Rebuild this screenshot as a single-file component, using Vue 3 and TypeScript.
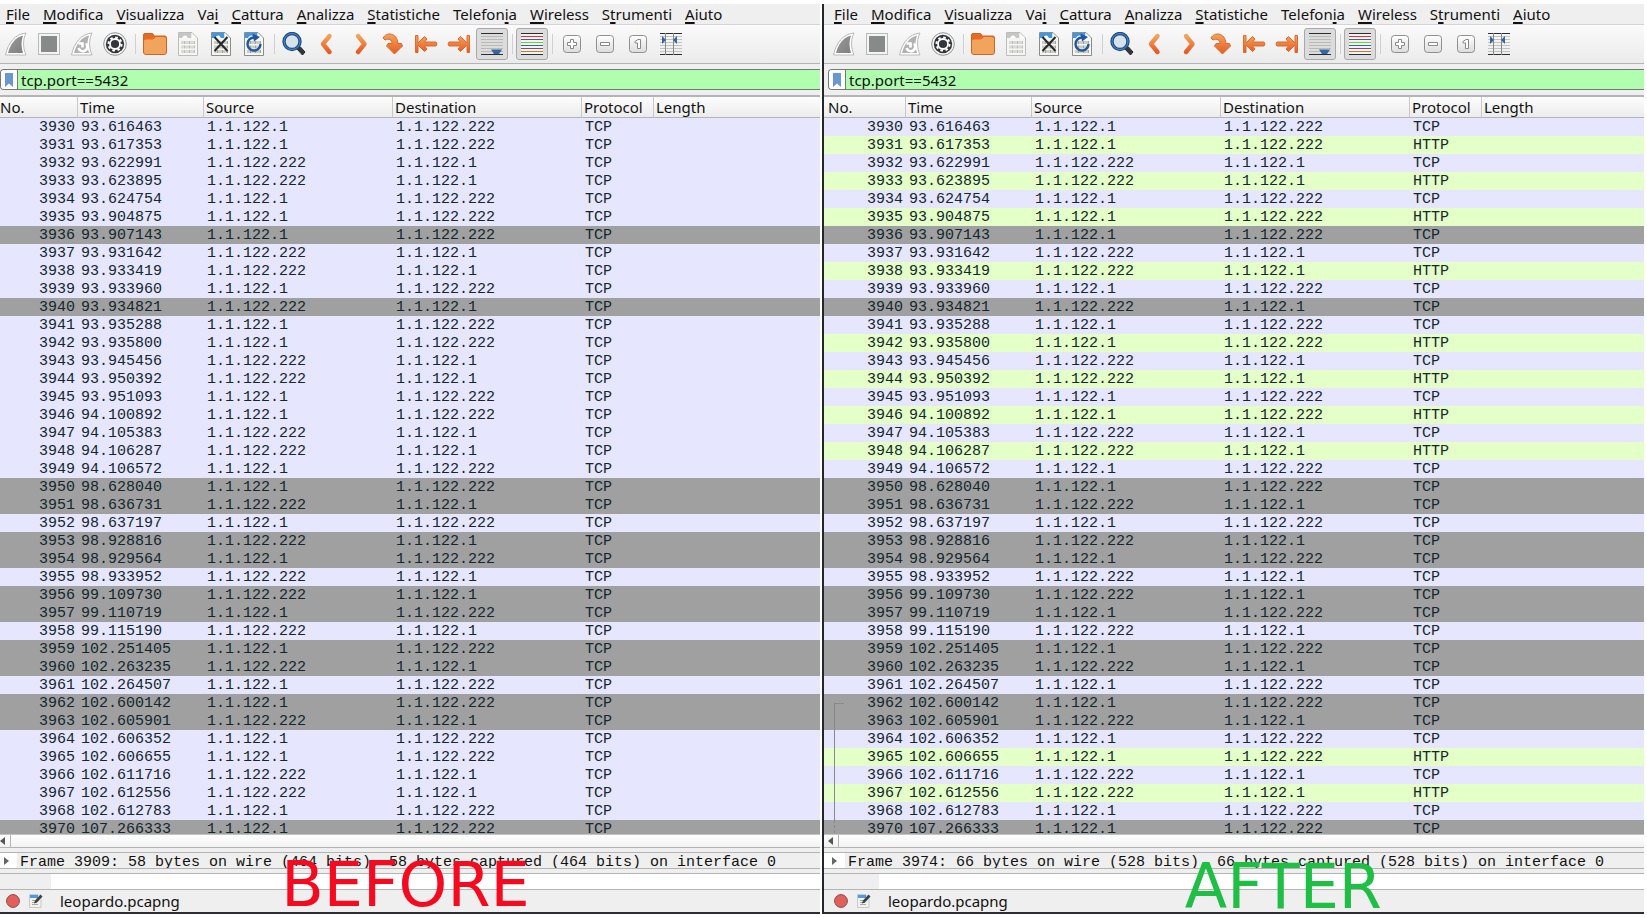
<script setup lang="ts">
interface MenuEntry {
  before: string
  key: string
  after: string
}

interface Packet {
  no: number
  time: string
  source: string
  destination: string
  bad: boolean
}

interface Capture {
  id: string
  caption: string
  frame: string
  http: number[]
  conversation: boolean
}

const menu: MenuEntry[] = [
  'F|ile', 'M|odifica', 'V|isualizza', 'Va>i|', 'C|attura', 'A|nalizza',
  'S|tatistiche', 'Telefon>i|a', 'W|ireless', 'S>t|rumenti', 'A|iuto',
].map((text) => {
  const [head, after] = text.split('|')
  const parts = head.split('>')
  return parts.length === 2
    ? { before: parts[0], key: parts[1], after }
    : { before: '', key: head, after }
})

const tools: { icon: string; label: string; on?: boolean }[] = [
  { icon: 'start', label: 'Avvia cattura' },
  { icon: 'stop', label: 'Ferma cattura' },
  { icon: 'restart', label: 'Riavvia cattura' },
  { icon: 'options', label: 'Opzioni di cattura' },
  { icon: 'sep', label: '' },
  { icon: 'open', label: 'Apri' },
  { icon: 'save', label: 'Salva' },
  { icon: 'close', label: 'Chiudi' },
  { icon: 'reload', label: 'Ricarica' },
  { icon: 'sep', label: '' },
  { icon: 'find', label: 'Trova pacchetto' },
  { icon: 'prev', label: 'Pacchetto precedente' },
  { icon: 'next', label: 'Pacchetto successivo' },
  { icon: 'goto', label: 'Vai al pacchetto' },
  { icon: 'first', label: 'Primo pacchetto' },
  { icon: 'last', label: 'Ultimo pacchetto' },
  { icon: 'scroll', label: 'Scorrimento automatico', on: true },
  { icon: 'sep', label: '' },
  { icon: 'colorize', label: 'Colora pacchetti', on: true },
  { icon: 'sep', label: '' },
  { icon: 'plus', label: 'Ingrandisci' },
  { icon: 'minus', label: 'Riduci' },
  { icon: 'one', label: 'Dimensione normale' },
  { icon: 'resize', label: 'Ridimensiona colonne' },
]

const client = '1.1.122.1'
const server = '1.1.122.222'

// ">" is client to server, "<" is server to client; "!" marks a bad TCP packet.
const trace = `
3930 93.616463 >
3931 93.617353 >
3932 93.622991 <
3933 93.623895 <
3934 93.624754 >
3935 93.904875 >
3936 93.907143 >!
3937 93.931642 <
3938 93.933419 <
3939 93.933960 >
3940 93.934821 <!
3941 93.935288 >
3942 93.935800 >
3943 93.945456 <
3944 93.950392 <
3945 93.951093 >
3946 94.100892 >
3947 94.105383 <
3948 94.106287 <
3949 94.106572 >
3950 98.628040 >!
3951 98.636731 <!
3952 98.637197 >
3953 98.928816 <!
3954 98.929564 >!
3955 98.933952 <
3956 99.109730 <!
3957 99.110719 >!
3958 99.115190 <
3959 102.251405 >!
3960 102.263235 <!
3961 102.264507 >
3962 102.600142 >!
3963 102.605901 <!
3964 102.606352 >
3965 102.606655 >
3966 102.611716 <
3967 102.612556 <
3968 102.612783 >
3970 107.266333 >!`

const packets: Packet[] = trace.trim().split('\n').map((line) => {
  const [no, time, flags] = line.split(' ')
  const out = flags[0] === '>'
  return {
    no: Number(no),
    time,
    source: out ? client : server,
    destination: out ? server : client,
    bad: flags.endsWith('!'),
  }
})

const captures: Capture[] = [
  {
    id: 'before',
    caption: 'BEFORE',
    frame: 'Frame 3909: 58 bytes on wire (464 bits), 58 bytes captured (464 bits) on interface 0',
    http: [],
    conversation: false,
  },
  {
    id: 'after',
    caption: 'AFTER',
    frame: 'Frame 3974: 66 bytes on wire (528 bits), 66 bytes captured (528 bits) on interface 0',
    http: [3931, 3933, 3935, 3938, 3942, 3944, 3946, 3948, 3965, 3967],
    conversation: true,
  },
]

function rowClass(capture: Capture, p: Packet) {
  return {
    bad: p.bad,
    http: capture.http.includes(p.no),
    'conv-start': capture.conversation && p.no === 3962,
    'conv-mid': capture.conversation && p.no > 3962 && p.no < 3970,
    'conv-next': capture.conversation && p.no === 3970,
  }
}
</script>

<template>
  <div class="desktop">
    <svg class="defs" width="0" height="0" aria-hidden="true">
      <defs>
        <linearGradient id="orange" x1="0" y1="0" x2="0" y2="1">
          <stop offset="0" stop-color="#f2a55a" /><stop offset="1" stop-color="#e95a22" />
        </linearGradient>
        <linearGradient id="grey" x1="0" y1="0" x2="1" y2="1">
          <stop offset="0" stop-color="#9c9c9c" /><stop offset="1" stop-color="#7c807e" />
        </linearGradient>
        <linearGradient id="key" x1="0" y1="0" x2="0" y2="1">
          <stop offset="0" stop-color="#ffffff" /><stop offset="1" stop-color="#dcdcdc" />
        </linearGradient>
      </defs>
    </svg>

    <main v-for="c in captures" :key="c.id" class="window" :class="c.id">
      <nav class="menubar">
        <button v-for="m in menu" :key="m.before + m.key + m.after" type="button">{{ m.before }}<u>{{ m.key }}</u>{{ m.after }}</button>
      </nav>

      <div class="toolbar">
        <template v-for="(t, i) in tools" :key="i">
          <span v-if="t.icon === 'sep'" class="sep"></span>
          <button v-else type="button" :class="{ on: t.on }" :aria-label="t.label">
            <svg width="24" height="24" viewBox="0 0 24 24" fill="none">
              <template v-if="t.icon === 'start' || t.icon === 'restart'">
                <path d="M1.5 23C4 11 11 2 22 1C18.500 8 19 16 22 23Z" fill="#fff" stroke="#b9b9b9" />
                <path d="M4 21C6.500 12 11 5.500 19 3.500C17 9 17 15 19 21Z" :fill="t.icon === 'start' ? 'url(#grey)' : '#b0b2b1'" />
                <path v-if="t.icon === 'restart'" d="M8.500 11.500H12.500V15.500M16 11.500A4.500 4.500 0 1 1 8.500 16" stroke="#fff" stroke-width="2.600" />
              </template>
              <template v-else-if="t.icon === 'stop'">
                <rect x="1.500" y="1.500" width="21" height="21" fill="#f4f4f4" stroke="#b9b9b9" />
                <rect x="4" y="4" width="16" height="16" fill="#868a88" />
              </template>
              <template v-else-if="t.icon === 'options'">
                <circle cx="12" cy="12" r="11.300" fill="#f8f8f8" stroke="#929292" />
                <circle cx="12" cy="12" r="9.200" fill="#33363a" />
                <circle cx="12" cy="12" r="5" stroke="#fff" stroke-width="1.800" />
                <circle cx="12" cy="12" r="6.600" stroke="#fff" stroke-width="2" stroke-dasharray="2.600 2.580" />
              </template>
              <template v-else-if="t.icon === 'open'">
                <path d="M.5 20V3Q.5 1.500 2 1.500H9Q10.500 1.500 11 4H22Q23.500 4 23.500 6V20Q23.500 22.500 21 22.500H3Q.5 22.500 .5 20Z" fill="#e86a22" stroke="#c9662a" />
                <path d="M1 9Q1 7.500 3 7.500H10L13 5H21Q23 5 23 7V20Q23 22 21 22H3Q1 22 1 20Z" fill="#f3a45c" />
              </template>
              <template v-else-if="t.icon === 'save' || t.icon === 'close' || t.icon === 'reload'">
                <path d="M2.500 .5H16L21.500 6V23.500H2.500Z" fill="#f6f6f2" :stroke="t.icon === 'save' ? '#bcbcbc' : '#8b8d88'" />
                <path d="M3 1H15.500V6H3Z" :fill="t.icon === 'save' ? '#c6c6c6' : '#3f97e6'" />
                <path d="M6 6Q7 3 10 3.500L12 6ZM15.500 1L21 6.500H15.500Z" fill="#fff" />
                <g :stroke="t.icon === 'save' ? '#bdbdbd' : '#a3a49c'" stroke-width="3">
                  <path d="M5.500 10.500H19M5.500 15H19M5.500 19.500H19" stroke-dasharray="1 1 2 1" />
                </g>
                <path v-if="t.icon === 'close'" d="M5.500 5L18.500 19M18.500 5L5.500 19" stroke="#26292c" stroke-width="2" />
                <template v-if="t.icon === 'reload'">
                  <path d="M18.500 12A6.500 6.500 0 1 1 12 5.500" stroke="#2056a0" stroke-width="2.400" />
                  <path d="M10.500 1.500L18 5L12 9.500Z" fill="#2056a0" />
                </template>
              </template>
              <template v-else-if="t.icon === 'find'">
                <path d="M15 17L18 14.500L23 20L20.500 23Z" fill="#34383c" stroke="#222" />
                <circle cx="10" cy="9.500" r="8" fill="#d8e2ea" stroke="#1f4f86" stroke-width="3.400" />
                <circle cx="10" cy="9.500" r="8" stroke="#4a8ccc" stroke-width="1" />
              </template>
              <path v-else-if="t.icon === 'prev'" d="M14.500 4L8 12L14.500 20" stroke="url(#orange)" stroke-width="4.400" stroke-linecap="round" stroke-linejoin="round" />
              <path v-else-if="t.icon === 'next'" d="M10 4L16.500 12L10 20" stroke="url(#orange)" stroke-width="4.400" stroke-linecap="round" stroke-linejoin="round" />
              <path v-else-if="t.icon === 'goto'" d="M2 6C5 0 16 0 17 11.500H20.500L21.500 14L13.500 22L5.500 14L7 11.500H11C11 8 8 6 4 8Z" fill="url(#orange)" stroke="#dc6a30" stroke-linejoin="round" />
              <path v-else-if="t.icon === 'first'" d="M1.500 3.500H4V11L10.500 4.500L13 7L10.500 10H22L23 12L22 14H10.500L13 17L10.500 19.500L4 13V20.500H1.500Z" fill="url(#orange)" stroke="#dd6b30" stroke-linejoin="round" />
              <path v-else-if="t.icon === 'last'" d="M22.500 3.500H20V11L13.500 4.500L11 7L13.500 10H2L1 12L2 14H13.500L11 17L13.500 19.500L20 13V20.500H22.500Z" fill="url(#orange)" stroke="#dd6b30" stroke-linejoin="round" />
              <template v-else-if="t.icon === 'scroll'">
                <path d="M1 1.500H23M1 22.500H23" stroke="#2b2e30" />
                <path d="M1 4.500H23M1 7.500H23M1 10.500H23M1 13.500H23M1 16.500H23M1 19.500H23" stroke="#b9bab6" />
                <path d="M11 17.500H22L19 22H14Z" fill="#3465a4" />
              </template>
              <template v-else-if="t.icon === 'colorize'">
                <path d="M1 1.500H23V22.500H1Z" fill="#f2f2f2" />
                <path d="M1 1.500H23M1 22.500H23" stroke="#2b2e30" />
                <path d="M1 4.500H23" stroke="#ef2929" /><path d="M1 7.500H23" stroke="#3465a4" />
                <path d="M1 10.500H23" stroke="#73d216" /><path d="M1 13.500H23" stroke="#3465a4" />
                <path d="M1 16.500H23" stroke="#75507b" /><path d="M1 19.500H23" stroke="#c17d11" />
              </template>
              <template v-else-if="t.icon === 'resize'">
                <path d="M1 4.500H23M1 7.500H23M1 10.500H23M1 13.500H23M1 16.500H23M1 19.500H23" stroke="#c2c3bf" />
                <path d="M1 1.500H23M1 22.500H23" stroke="#2b2e30" />
                <path d="M6.500 1V23M14.500 1V23" stroke="#888a85" />
                <path d="M3 4L7 8L3 12ZM18 4L14 8L18 12Z" fill="#3465a4" />
              </template>
              <template v-else>
                <rect x="3.500" y="3.500" width="17" height="17" rx="3" fill="url(#key)" stroke="#8f8f8f" />
                <path v-if="t.icon === 'plus'" d="M10.500 7.500H13.500V10.500H16.500V13.500H13.500V16.500H10.500V13.500H7.500V10.500H10.500Z" fill="#fff" stroke="#888" />
                <path v-else-if="t.icon === 'minus'" d="M7.500 10.500H16.500V13.500H7.500Z" fill="#fff" stroke="#888" />
                <path v-else d="M9 9.500L12 7.500H14.500V16.500H11.500V11H9Z" fill="#fff" stroke="#888" />
              </template>
            </svg>
          </button>
        </template>
      </div>

      <div class="filterbar">
        <div class="filter">
          <button type="button" aria-label="Segnalibri">
            <svg width="10" height="14" viewBox="0 0 10 14"><path d="M1 0H9V14L5 10.500L1 14Z" fill="#6b97d0" /></svg>
          </button>
          <input type="text" value="tcp.port==5432" aria-label="Filtro di visualizzazione" spellcheck="false" />
        </div>
      </div>

      <div class="list">
        <table>
          <colgroup>
            <col class="c-no" /><col class="c-time" /><col class="c-addr" /><col class="c-addr" /><col class="c-proto" /><col />
          </colgroup>
          <thead>
            <tr><th>No.</th><th>Time</th><th>Source</th><th>Destination</th><th>Protocol</th><th>Length</th></tr>
          </thead>
          <tbody>
            <tr v-for="p in packets" :key="p.no" :class="rowClass(c, p)">
              <td>{{ p.no }}</td>
              <td>{{ p.time }}</td>
              <td>{{ p.source }}</td>
              <td>{{ p.destination }}</td>
              <td>{{ c.http.includes(p.no) ? 'HTTP' : 'TCP' }}</td>
              <td></td>
            </tr>
          </tbody>
        </table>
      </div>

      <div class="scrollbar">
        <button type="button" aria-label="Scorri a sinistra">
          <svg width="5" height="8" viewBox="0 0 5 8"><path d="M5 0V8L0 4Z" fill="#555" /></svg>
        </button>
      </div>

      <div class="details">
        <span class="branch"><svg width="5" height="8" viewBox="0 0 5 8"><path d="M0 0V8L5 4Z" fill="#666" /></svg></span>
        <span class="frame">{{ c.frame }}</span>
      </div>

      <div class="bytes"><span></span></div>

      <footer class="status">
        <button type="button" aria-label="Informazioni esperto">
          <svg width="14" height="14" viewBox="0 0 14 14"><circle cx="7" cy="7" r="6.400" fill="#e2605c" stroke="#8f4a48" /></svg>
        </button>
        <button type="button" aria-label="Commento alla cattura">
          <svg width="14" height="14" viewBox="0 0 14 14">
            <path d="M.5 .5H9L12 3.500V13.500H.5Z" fill="#f1f1ee" stroke="#c9cac6" />
            <path d="M1 1H9V4H1Z" fill="#4b9be6" />
            <path d="M3 6.500H9M3 8.500H8M3 10.500H9" stroke="#a9aaa6" />
            <path d="M5 9.500L6 6.500L11.500 .5L13.500 2.500L8 8.500Z" fill="#3d4246" />
          </svg>
        </button>
        <span class="file">leopardo.pcapng</span>
      </footer>

      <strong class="caption">{{ c.caption }}</strong>
    </main>
  </div>
</template>

<style>
body {
  margin: 0;
  background: #fff;
}
</style>

<style scoped>
.desktop {
  box-sizing: border-box;
  display: flex;
  height: 100vh;
  padding: 4px 3px 4px 0;
  overflow: hidden;
  font: 15px/20px "Noto Sans", "Open Sans", sans-serif;
  color: #111;
}

.defs {
  position: absolute;
}

button,
input {
  padding: 0;
  border: 0;
  background: none;
  font: inherit;
  color: inherit;
}

svg {
  display: block;
}

.window {
  --inset: 0px;
  position: relative;
  display: flex;
  flex: 1 1 0;
  flex-direction: column;
  min-width: 0;
  overflow: hidden;
  background: #efefef;
  border-bottom: 2px solid #2b2d31;
}

.window.after {
  --inset: 4px;
  margin-left: 2px;
  border-left: 2px solid #23262b;
}

.menubar {
  display: flex;
  gap: 13px;
  height: 20px;
  padding-left: calc(var(--inset) + 6px);
  border-bottom: 1px solid #d4d4d4;
  white-space: nowrap;
}

.menubar u {
  text-decoration-thickness: 2px;
  text-underline-offset: 2px;
  text-decoration-skip-ink: none;
}

.toolbar {
  display: flex;
  align-items: center;
  gap: 1px;
  height: 38px;
  padding-left: var(--inset);
  background: linear-gradient(#fafafa, #ebebeb);
  border-bottom: 1px solid #b4b4b4;
}

.toolbar button {
  box-sizing: border-box;
  display: grid;
  flex: none;
  place-items: center;
  width: 32px;
  height: 32px;
}

.toolbar button.on {
  border: 1px solid #a8a8a8;
  border-radius: 3px;
  background: #dcdcdc;
}

.sep {
  flex: none;
  width: 6px;
  height: 20px;
  background: linear-gradient(#d0d0d0, #d0d0d0) center / 1px 100% no-repeat;
}

.filterbar {
  padding: 5px 0 5px var(--inset);
  border-bottom: 2px solid #b4b4b4;
}

.filter {
  box-sizing: border-box;
  display: flex;
  height: 21px;
  overflow: hidden;
  border: 1px solid #777;
  border-right: 0;
  border-radius: 4px 0 0 4px;
  background: #afffaf;
}

.filter button {
  display: grid;
  place-items: center;
  width: 17px;
  background: #fff;
  border-right: 1px solid #777;
}

.filter input {
  flex: 1;
  min-width: 0;
  padding-left: 3px;
  outline: 0;
}

.list {
  flex: 1 1 0;
  min-height: 0;
  overflow: hidden;
  border-bottom: 1px solid #c4c4c4;
}

table {
  width: 100%;
  table-layout: fixed;
  border-collapse: separate;
  border-spacing: 0;
}

.c-no {
  width: calc(var(--inset) + 77px);
}

.c-time {
  width: 126px;
}

.c-addr {
  width: 189px;
}

.c-proto {
  width: 72px;
}

th {
  box-sizing: border-box;
  height: 21px;
  padding: 0 0 0 2px;
  border-bottom: 1px solid #b4b4b4;
  border-left: 1px solid #c8c8c8;
  background: linear-gradient(#fdfdfd, #ececec);
  font-weight: 400;
  line-height: 20px;
  text-align: left;
}

th:first-child {
  padding-left: var(--inset);
  border-left: 0;
}

td {
  height: 16px;
  padding: 2px 0 0 4px;
  font: 15px/16px "Liberation Mono", monospace;
  color: #12272e;
  white-space: pre;
}

td:first-child {
  position: relative;
  padding: 2px 2px 0 0;
  text-align: right;
}

tbody tr {
  background: #e7e6ff;
}

tbody tr.http {
  background: #e4ffc7;
}

tbody tr.bad {
  background: #a0a0a0;
}

.conv-start td:first-child::before,
.conv-mid td:first-child::before,
.conv-next td:first-child::before {
  content: "";
  position: absolute;
  bottom: 0;
  left: 10px;
  width: 9px;
  height: 18px;
  border-left: 1px solid #868a8c;
}

.conv-start td:first-child::before {
  height: 8px;
  border-top: 1px solid #868a8c;
}

.conv-next td:first-child::before {
  border-left-style: dashed;
}

.scrollbar {
  height: 12px;
  background: linear-gradient(#fff, #f2f2f2);
  border-bottom: 1px solid #b4b4b4;
}

.scrollbar button {
  display: grid;
  place-items: center end;
  box-sizing: border-box;
  width: calc(var(--inset) + 11px);
  height: 12px;
  padding-right: 5px;
  border-right: 1px solid #b4b4b4;
}

.details {
  display: flex;
  height: 15px;
  margin-top: 4px;
  overflow: hidden;
  border-top: 1px solid #b4b4b4;
  border-bottom: 1px solid #b4b4b4;
}

.branch {
  display: grid;
  flex: none;
  place-items: center end;
  box-sizing: border-box;
  width: calc(var(--inset) + 17px);
  padding-right: 8px;
  background: #fff;
}

.frame {
  padding-left: 3px;
  font: 15px/19px "Liberation Mono", monospace;
  white-space: nowrap;
  color: #111;
}

.bytes {
  display: flex;
  height: 15px;
  margin-top: 4px;
  border-top: 1px solid #b4b4b4;
  border-bottom: 1px solid #b4b4b4;
  background: #fff;
}

.bytes span {
  width: calc(var(--inset) + 51px);
  background: #efefef;
}

.status {
  display: flex;
  align-items: center;
  gap: 9px;
  height: 22px;
  padding-left: calc(var(--inset) + 6px);
}

.file {
  padding-left: 8px;
  line-height: 22px;
}

.caption {
  position: absolute;
  bottom: -4px;
  left: 34.3%;
  font: 400 62px/1 "DejaVu Sans", sans-serif;
  color: #f60a20;
}

.after .caption {
  bottom: -6px;
  left: 44%;
  color: #1fbf45;
}
</style>
